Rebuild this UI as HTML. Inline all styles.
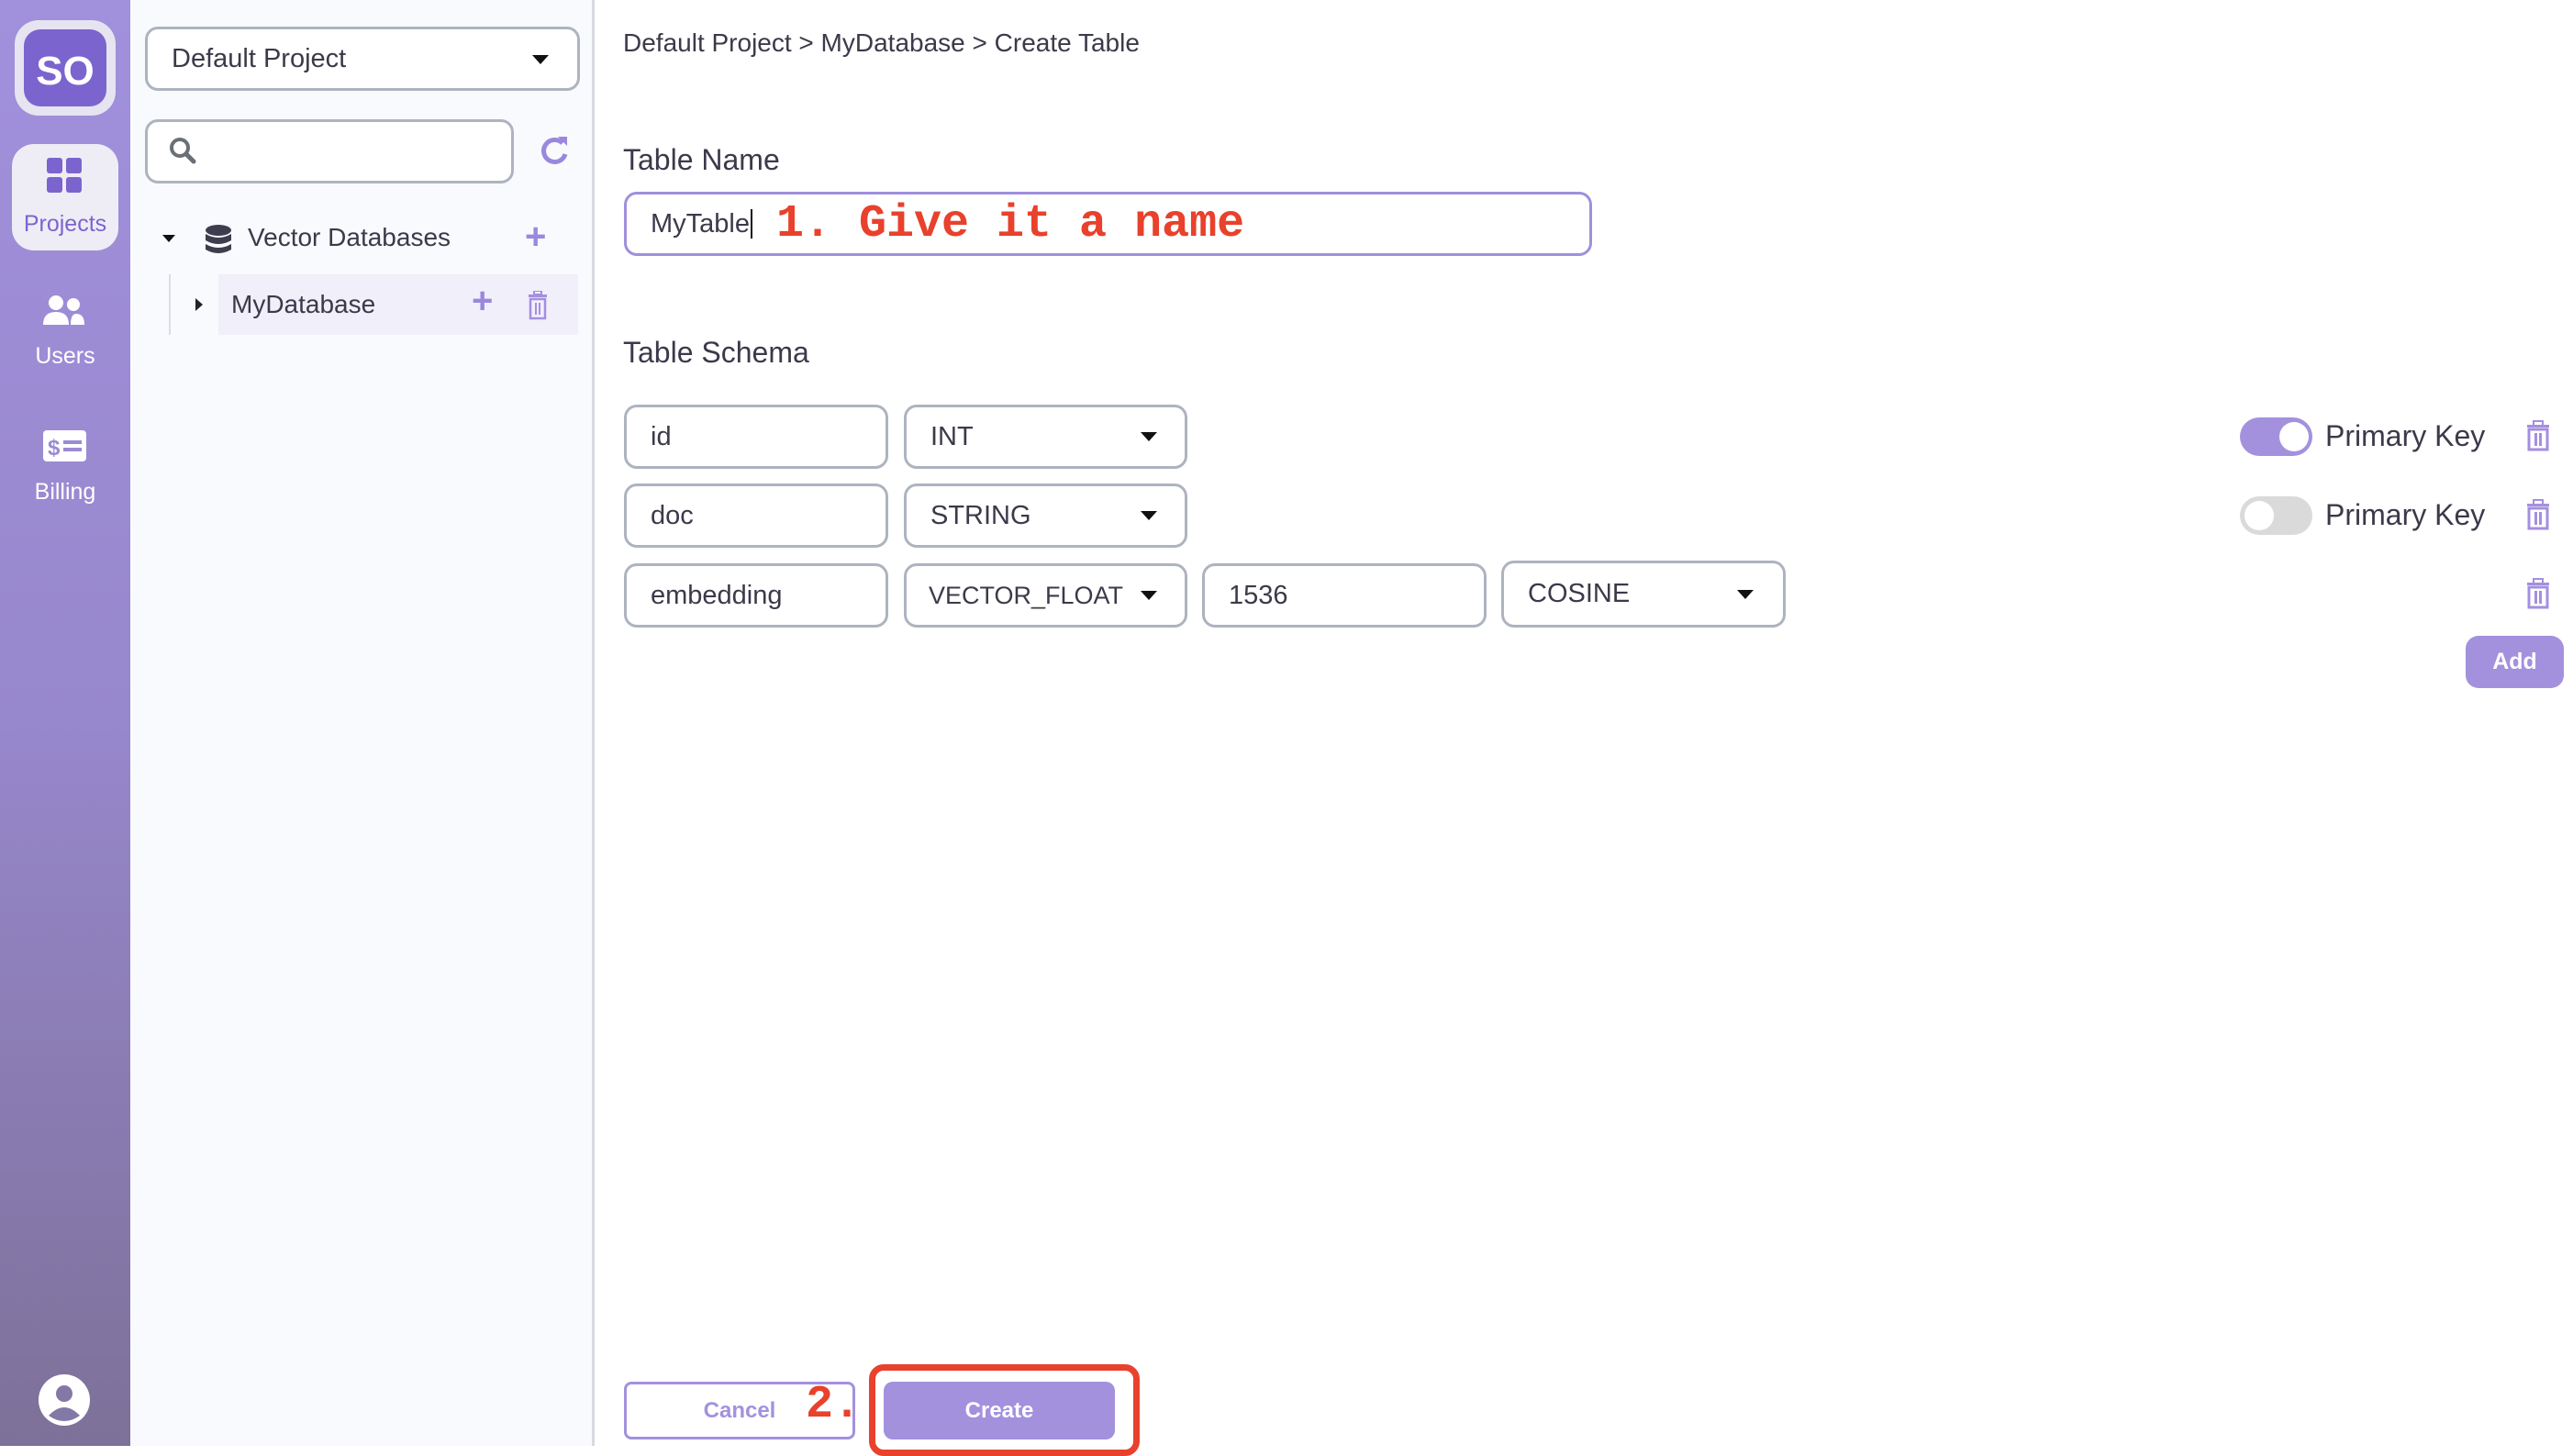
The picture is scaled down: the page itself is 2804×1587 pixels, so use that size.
<!DOCTYPE html>
<html><head><meta charset="utf-8"><style>
*{box-sizing:border-box;margin:0;padding:0}
body{width:2804px;height:1576px;overflow:hidden;background:#fff;font-family:"Liberation Sans",sans-serif;color:#3b3a4a;position:relative}
.a{position:absolute}
.side{left:0;top:0;width:142px;height:1576px;background:linear-gradient(180deg,#a190dc 0%,#9787cc 50%,#7d7199 100%)}
.panel{left:142px;top:0;width:506px;height:1576px;background:#f9fafe;border-right:3px solid #d7dae3}
.box{position:absolute;border:3px solid #adb4bf;border-radius:14px;background:#fff;font-size:29px;color:#3b3a4a;display:flex;align-items:center;padding-left:26px}
.tri{position:absolute;width:0;height:0;border-left:9px solid transparent;border-right:9px solid transparent;border-top:10px solid #111}
.lbl{font-size:32px;color:#3b3a4a}
.pk{font-size:32px;color:#3b3a4a}
</style></head><body>
<div class="a side"></div>
<div class="a" style="left:16px;top:22px;width:110px;height:104px;border-radius:26px;background:#e6e4f0"></div>
<div class="a" style="left:26px;top:32px;width:90px;height:84px;border-radius:18px;background:#7c64ce;color:#fff;font-size:44px;font-weight:bold;display:flex;align-items:center;justify-content:center;padding-top:8px">SO</div>
<div class="a" style="left:13px;top:157px;width:116px;height:116px;border-radius:24px;background:#eeedf6"></div>
<svg class="a" style="left:51px;top:172px" width="40" height="40"><rect x="0" y="0" width="17" height="17" rx="3" fill="#7c64ce"/><rect x="21" y="0" width="17" height="17" rx="3" fill="#7c64ce"/><rect x="0" y="21" width="17" height="17" rx="3" fill="#7c64ce"/><rect x="21" y="21" width="17" height="17" rx="3" fill="#7c64ce"/></svg>
<div class="a" style="left:0;top:230px;width:142px;text-align:center;font-size:25px;color:#7c64ce">Projects</div>
<svg class="a" style="left:47px;top:322px" width="46" height="34"><circle cx="14" cy="8" r="8" fill="#fff"/><circle cx="33" cy="10" r="7" fill="#fff"/><path d="M0 32 Q0 18 14 18 Q28 18 28 32 Z" fill="#fff"/><path d="M30 32 Q30 20 36 20 Q45 20 45 32 Z" fill="#fff"/></svg>
<div class="a" style="left:0;top:374px;width:142px;text-align:center;font-size:25px;color:#fff">Users</div>
<svg class="a" style="left:47px;top:469px" width="48" height="34"><rect width="47" height="34" rx="4" fill="#fff"/><text x="5" y="27" font-size="24" font-weight="bold" fill="#9a8bd3" font-family="Liberation Sans">$</text><rect x="22" y="11" width="20" height="4" fill="#9a8bd3"/><rect x="22" y="19" width="20" height="4" fill="#9a8bd3"/></svg>
<div class="a" style="left:0;top:522px;width:142px;text-align:center;font-size:25px;color:#fff">Billing</div>
<svg class="a" style="left:41px;top:1497px" width="58" height="58"><circle cx="29" cy="29" r="28" fill="#fff"/><circle cx="29" cy="22" r="9" fill="#8478a6"/><path d="M12 46 Q29 28 46 46 Q29 58 12 46Z" fill="#8478a6"/></svg>

<div class="a panel"></div>
<div class="box" style="left:158px;top:29px;width:474px;height:70px">Default Project</div>
<div class="tri" style="left:580px;top:60px"></div>
<div class="box" style="left:158px;top:130px;width:402px;height:70px"></div>
<svg class="a" style="left:184px;top:149px" width="32" height="32"><circle cx="12" cy="12" r="9" stroke="#6b6f78" stroke-width="4" fill="none"/><path d="M19 19 L27 27" stroke="#6b6f78" stroke-width="5" stroke-linecap="round"/></svg>
<svg class="a" style="left:586px;top:146px" width="38" height="38"><path d="M30 22 A12 12 0 1 1 27 10" stroke="#9a88dd" stroke-width="5" fill="none"/><path d="M22 3 L32 3 L32 13 Z" fill="#9a88dd"/></svg>
<div class="tri" style="left:177px;top:256px;border-width:8px 7px 0 7px"></div>
<svg class="a" style="left:223px;top:245px" width="30" height="32"><ellipse cx="15" cy="6" rx="14" ry="6" fill="#3e3d4e"/><path d="M1 10 Q15 18 29 10 V17 Q15 25 1 17Z" fill="#3e3d4e"/><path d="M1 21 Q15 29 29 21 V27 Q15 35 1 27Z" fill="#3e3d4e"/></svg>
<div class="a" style="left:270px;top:243px;font-size:28px">Vector Databases</div>
<div class="a" style="left:572px;top:236px;font-size:40px;color:#9a88dd;font-weight:bold">+</div>
<div class="a" style="left:184px;top:299px;width:2px;height:66px;background:#dcdde4"></div>
<div class="a" style="left:238px;top:299px;width:392px;height:66px;background:#f1effa"></div>
<svg class="a" style="left:212px;top:324px" width="10" height="16"><path d="M1 1 L9 8 L1 15Z" fill="#222"/></svg>
<div class="a" style="left:252px;top:315px;font-size:28px;line-height:34px">MyDatabase</div>
<div class="a" style="left:514px;top:306px;font-size:40px;color:#9a88dd;font-weight:bold">+</div>
<svg class="a" style="left:573px;top:317px" width="26" height="32"><rect x="3" y="4" width="20" height="3" fill="#a48fe0"/><rect x="9" y="0" width="8" height="4" fill="none" stroke="#a48fe0" stroke-width="2"/><rect x="5" y="9" width="16" height="21" fill="none" stroke="#a48fe0" stroke-width="2.5"/><rect x="10" y="13" width="2" height="13" fill="#a48fe0"/><rect x="14" y="13" width="2" height="13" fill="#a48fe0"/></svg>

<div class="a" style="left:679px;top:31px;font-size:28px">Default Project &gt; MyDatabase &gt; Create Table</div>
<div class="a lbl" style="left:679px;top:156px">Table Name</div>
<div class="box" style="left:680px;top:209px;width:1055px;height:70px;border-color:#a08fdd">MyTable<span style="display:inline-block;width:2px;height:32px;background:#111;margin-left:1px"></span><span style="font-family:'Liberation Mono',monospace;font-weight:bold;color:#e8412c;font-size:50px;margin-left:26px">1. Give it a name</span></div>
<div class="a lbl" style="left:679px;top:366px">Table Schema</div>

<div class="box" style="left:680px;top:441px;width:288px;height:70px">id</div>
<div class="box" style="left:985px;top:441px;width:309px;height:70px">INT</div><div class="tri" style="left:1243px;top:471px"></div>
<div class="box" style="left:680px;top:527px;width:288px;height:70px">doc</div>
<div class="box" style="left:985px;top:527px;width:309px;height:70px">STRING</div><div class="tri" style="left:1243px;top:557px"></div>
<div class="box" style="left:680px;top:614px;width:288px;height:70px">embedding</div>
<div class="box" style="left:985px;top:614px;width:309px;height:70px;font-size:27px;padding-left:24px">VECTOR_FLOAT</div><div class="tri" style="left:1243px;top:644px"></div>
<div class="box" style="left:1310px;top:614px;width:310px;height:70px">1536</div>
<div class="box" style="left:1636px;top:611px;width:310px;height:73px">COSINE</div><div class="tri" style="left:1893px;top:643px"></div>

<div class="a" style="left:2441px;top:455px;width:79px;height:42px;border-radius:21px;background:#a391de"></div>
<div class="a" style="left:2484px;top:460px;width:32px;height:32px;border-radius:50%;background:#fff"></div>
<div class="a pk" style="left:2534px;top:457px">Primary Key</div>
<div class="a" style="left:2441px;top:541px;width:79px;height:42px;border-radius:21px;background:#dadada"></div>
<div class="a" style="left:2446px;top:546px;width:32px;height:32px;border-radius:50%;background:#fff"></div>
<div class="a pk" style="left:2534px;top:543px">Primary Key</div>
<svg class="a" style="left:2752px;top:458px" width="28" height="34"><rect x="2" y="5" width="24" height="3" fill="#a48fe0"/><rect x="9" y="1" width="10" height="5" fill="none" stroke="#a48fe0" stroke-width="2"/><rect x="4" y="10" width="20" height="22" fill="none" stroke="#a48fe0" stroke-width="3"/><rect x="10" y="14" width="3" height="14" fill="#a48fe0"/><rect x="15" y="14" width="3" height="14" fill="#a48fe0"/></svg>
<svg class="a" style="left:2752px;top:544px" width="28" height="34"><rect x="2" y="5" width="24" height="3" fill="#a48fe0"/><rect x="9" y="1" width="10" height="5" fill="none" stroke="#a48fe0" stroke-width="2"/><rect x="4" y="10" width="20" height="22" fill="none" stroke="#a48fe0" stroke-width="3"/><rect x="10" y="14" width="3" height="14" fill="#a48fe0"/><rect x="15" y="14" width="3" height="14" fill="#a48fe0"/></svg>
<svg class="a" style="left:2752px;top:630px" width="28" height="34"><rect x="2" y="5" width="24" height="3" fill="#a48fe0"/><rect x="9" y="1" width="10" height="5" fill="none" stroke="#a48fe0" stroke-width="2"/><rect x="4" y="10" width="20" height="22" fill="none" stroke="#a48fe0" stroke-width="3"/><rect x="10" y="14" width="3" height="14" fill="#a48fe0"/><rect x="15" y="14" width="3" height="14" fill="#a48fe0"/></svg>
<div class="a" style="left:2687px;top:693px;width:107px;height:57px;border-radius:14px;background:#a391de;color:#fff;font-weight:bold;font-size:25px;display:flex;align-items:center;justify-content:center">Add</div>

<div class="a" style="left:680px;top:1506px;width:252px;height:63px;border:3px solid #a391de;border-radius:8px;background:#fff;color:#a391de;font-weight:bold;font-size:24px;display:flex;align-items:center;justify-content:center">Cancel</div>
<div class="a" style="left:878px;top:1502px;font-family:'Liberation Mono',monospace;font-weight:bold;color:#e8412c;font-size:50px;line-height:60px">2.</div>
<div class="a" style="left:947px;top:1487px;width:295px;height:100px;border:7px solid #e8412c;border-radius:16px"></div>
<div class="a" style="left:963px;top:1506px;width:252px;height:63px;border-radius:10px;background:#a391de;color:#fff;font-weight:bold;font-size:24px;display:flex;align-items:center;justify-content:center">Create</div>
</body></html>
